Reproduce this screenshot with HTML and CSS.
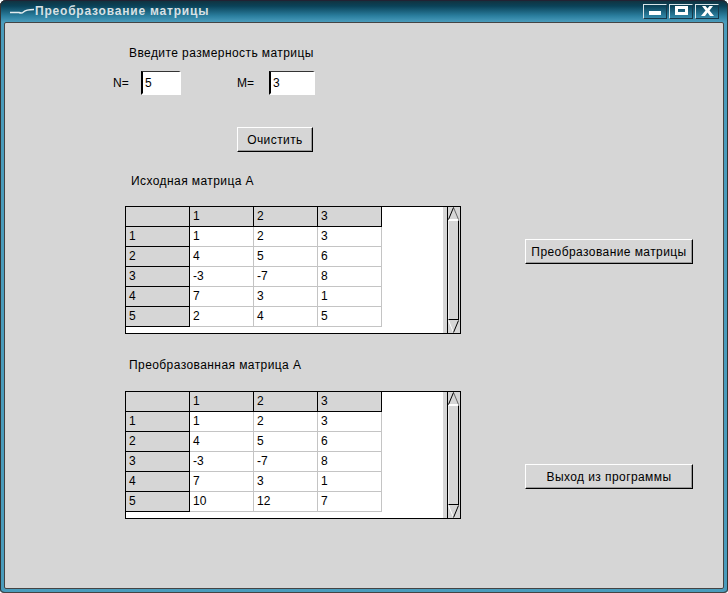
FILE: index.html
```html
<!DOCTYPE html>
<html>
<head>
    <title>Преобразование матрицы</title>
    <link rel="stylesheet" href="styles.css">
</head>
<body>
    <div class="window">
        <div class="titlebar">
            <svg class="app-icon" width="24" height="8" viewBox="0 0 24 8">
                <path d="M0 4.5H9C11 5.5 12 5.5 13.5 4S17 1.5 24 1.5" fill="none" stroke="#e4ecef" stroke-width="1.4"/>
            </svg>
            <span class="title">Преобразование матрицы</span>
            <div class="win-buttons">
                <div class="win-btn">
                    <svg width="13" height="10" viewBox="0 0 13 10"><rect x="0" y="5" width="12" height="4" fill="#fff"/></svg>
                </div>
                <div class="win-btn">
                    <svg width="13" height="10" viewBox="0 0 13 10"><path d="M0 0H13V9H0ZM3 3V6H10V3Z" fill="#fff" fill-rule="evenodd"/></svg>
                </div>
                <div class="win-btn">
                    <svg width="13" height="10" viewBox="0 0 13 10"><path d="M1 0H4.5L6.5 2.5L8.5 0H12L8.5 4.5L13 10H9L6.5 6.5L4 10H0L4.5 4.5Z" fill="#fff"/></svg>
                </div>
            </div>
        </div>
        <div class="client">
            <div class="left">
                <div class="caption cap-size">Введите размерность матрицы</div>
                <div class="size-row">
                    <label class="size-label">N=</label>
                    <input class="size-input input-n" value="5">
                    <label class="size-label label-m">M=</label>
                    <input class="size-input input-m" value="3">
                </div>
                <button class="btn btn-clear">Очистить</button>
                <div class="caption cap-src">Исходная матрица А</div>
                <div class="grid-box">
                    <table class="grid">
                        <tr><th></th><th>1</th><th>2</th><th>3</th></tr>
                        <tr><th>1</th><td>1</td><td>2</td><td>3</td></tr>
                        <tr><th>2</th><td>4</td><td>5</td><td>6</td></tr>
                        <tr><th>3</th><td>-3</td><td>-7</td><td>8</td></tr>
                        <tr><th>4</th><td>7</td><td>3</td><td>1</td></tr>
                        <tr><th>5</th><td>2</td><td>4</td><td>5</td></tr>
                    </table>
                    <div class="scrollbar">
                        <div class="arrow"><svg width="11" height="13" viewBox="0 0 11 13"><path d="M5.5 .5L10.5 12.5" fill="none" stroke="#666"/><path d="M.5 12.5L5.5 .5" fill="none" stroke="#000"/><path d="M1 12.5H10" stroke="#fff"/></svg></div>
                        <div class="thumb"></div>
                        <div class="arrow"><svg width="11" height="13" viewBox="0 0 11 13"><path d="M.5 .5L5.5 12.5" fill="none" stroke="#fff"/><path d="M5.5 12.5L10.5 .5" fill="none" stroke="#000"/></svg></div>
                    </div>
                </div>
                <div class="caption cap-dst">Преобразованная матрица А</div>
                <div class="grid-box">
                    <table class="grid">
                        <tr><th></th><th>1</th><th>2</th><th>3</th></tr>
                        <tr><th>1</th><td>1</td><td>2</td><td>3</td></tr>
                        <tr><th>2</th><td>4</td><td>5</td><td>6</td></tr>
                        <tr><th>3</th><td>-3</td><td>-7</td><td>8</td></tr>
                        <tr><th>4</th><td>7</td><td>3</td><td>1</td></tr>
                        <tr><th>5</th><td>10</td><td>12</td><td>7</td></tr>
                    </table>
                    <div class="scrollbar">
                        <div class="arrow"><svg width="11" height="13" viewBox="0 0 11 13"><path d="M5.5 .5L10.5 12.5" fill="none" stroke="#666"/><path d="M.5 12.5L5.5 .5" fill="none" stroke="#000"/><path d="M1 12.5H10" stroke="#fff"/></svg></div>
                        <div class="thumb"></div>
                        <div class="arrow"><svg width="11" height="13" viewBox="0 0 11 13"><path d="M.5 .5L5.5 12.5" fill="none" stroke="#fff"/><path d="M5.5 12.5L10.5 .5" fill="none" stroke="#000"/></svg></div>
                    </div>
                </div>
            </div>
            <div class="right">
                <button class="btn btn-wide btn-convert">Преобразование матрицы</button>
                <button class="btn btn-wide btn-exit">Выход из программы</button>
            </div>
        </div>
    </div>
</body>
</html>
```

FILE: styles.css
```css
html, body {
    margin: 0;
    padding: 0;
}
body {
    width: 728px;
    height: 593px;
    overflow: hidden;
    font-family: 'Liberation Sans', Arial, sans-serif;
    font-size: 12px;
    color: #000;
}
.window {
    box-sizing: border-box;
    width: 728px;
    height: 593px;
    display: flex;
    flex-direction: column;
    padding: 0 2px 2px 2px;
    background-color: #4a9cbc;
    border-bottom: 1px solid #444;
    border-radius: 6px 6px 4px 4px;
    background-image: linear-gradient(#12303c 0, #0a4258 6px, #2b7f9f 16px, #4a9cbc 22px);
    box-shadow: inset 1px 0 0 #333, inset -1px 0 0 #333, inset 0 1px 0 #223;
}

/* title bar */
.titlebar {
    height: 21px;
    display: flex;
    align-items: center;
    flex-shrink: 0;
}
.app-icon {
    margin-left: 8px;
    margin-top: 3px;
}
.title {
    margin-left: 1px;
    color: #d8e0e4;
    font-size: 12px;
    font-weight: bold;
    letter-spacing: .8px;
}
.win-buttons {
    margin-left: auto;
    margin-right: 7px;
    margin-top: 1px;
    display: flex;
    gap: 2px;
}
.win-btn {
    box-sizing: border-box;
    width: 24px;
    height: 15px;
    display: flex;
    align-items: center;
    justify-content: center;
    border: 1px solid #d8e4e8;
    border-right-color: #16384a;
    border-bottom-color: #16384a;
}

/* client area */
.client {
    flex: 1;
    display: flex;
    margin: 1px 2px 1px 2px;
    background-color: #d6d6d6;
    border: 1px solid #444;
    border-radius: 2px;
}
.left {
    width: 520px;
    padding-left: 120px;
    box-sizing: border-box;
    flex-shrink: 0;
}
.right {
    display: flex;
    flex-direction: column;
    align-items: flex-start;
}
.caption {
    line-height: 16px;
    letter-spacing: .42px;
}
.cap-size {
    margin-top: 22px;
    margin-left: 4px;
}
.size-row {
    display: flex;
    align-items: center;
    margin-top: 10px;
    margin-left: -12px;
}
.size-input {
    box-sizing: border-box;
    height: 24px;
    padding: 1px 0 0 2px;
    font: 12px 'Liberation Sans', Arial, sans-serif;
    background: #fff;
    border: 2px solid #fff;
    border-top: 1px solid #333;
    border-left-color: #000;
    outline: none;
    border-radius: 0;
}
.size-label {
    width: 28px;
}
.input-n {
    width: 40px;
}
.label-m {
    width: 32px;
    margin-left: 56px;
}
.input-m {
    width: 46px;
}
.btn {
    display: block;
    box-sizing: border-box;
    height: 25px;
    padding: 0;
    font: 12px 'Liberation Sans', Arial, sans-serif;
    letter-spacing: .42px;
    color: #000;
    background: #d6d6d6;
    border: 1px solid #fff;
    border-right-color: #000;
    border-bottom-color: #000;
    box-shadow: inset -1px -1px 0 #9a9a9a;
}
.btn-clear {
    width: 76px;
    margin-top: 32px;
    margin-left: 112px;
}
.cap-src {
    margin-top: 21px;
    margin-left: 6px;
}
.grid-box {
    box-sizing: border-box;
    width: 336px;
    height: 128px;
    display: flex;
    justify-content: space-between;
    background: #fff;
    border: 1px solid #000;
}
.cap-src + .grid-box {
    margin-top: 17px;
}
.cap-dst {
    margin-top: 23px;
    margin-left: 4px;
}
.cap-dst + .grid-box {
    margin-top: 18px;
}

/* string grid */
.grid {
    border-collapse: separate;
    border-spacing: 0;
    table-layout: fixed;
    width: 256px;
    height: 120px;
    align-self: flex-start;
}
.grid th, .grid td {
    box-sizing: border-box;
    height: 20px;
    width: 64px;
    padding: 0 0 2px 3px;
    font-weight: normal;
    font-size: 12px;
    text-align: left;
    vertical-align: middle;
}
.grid th {
    background: #d6d6d6;
    border-right: 1px solid #000;
    border-bottom: 1px solid #000;
}
.grid td {
    border-right: 1px solid #c4c4c4;
    border-bottom: 1px solid #c4c4c4;
}
.scrollbar {
    box-sizing: border-box;
    width: 17px;
    display: flex;
    flex-direction: column;
    background: #d6d6d6;
    border-left: 4px solid #d6d6d6;
    border-right: 1px solid #d6d6d6;
    box-shadow: inset 1px 0 0 #000;
    padding-left: 1px;
}
.arrow {
    height: 13px;
    line-height: 0;
    flex-shrink: 0;
}
.thumb {
    flex: 1;
    border: 1px solid #000;
    border-top-color: #fff;
    border-left-color: #eee;
}

/* right hand buttons */
.btn-wide {
    width: 168px;
}
.btn-convert {
    margin-top: 216px;
}
.btn-exit {
    margin-top: 200px;
}
```
